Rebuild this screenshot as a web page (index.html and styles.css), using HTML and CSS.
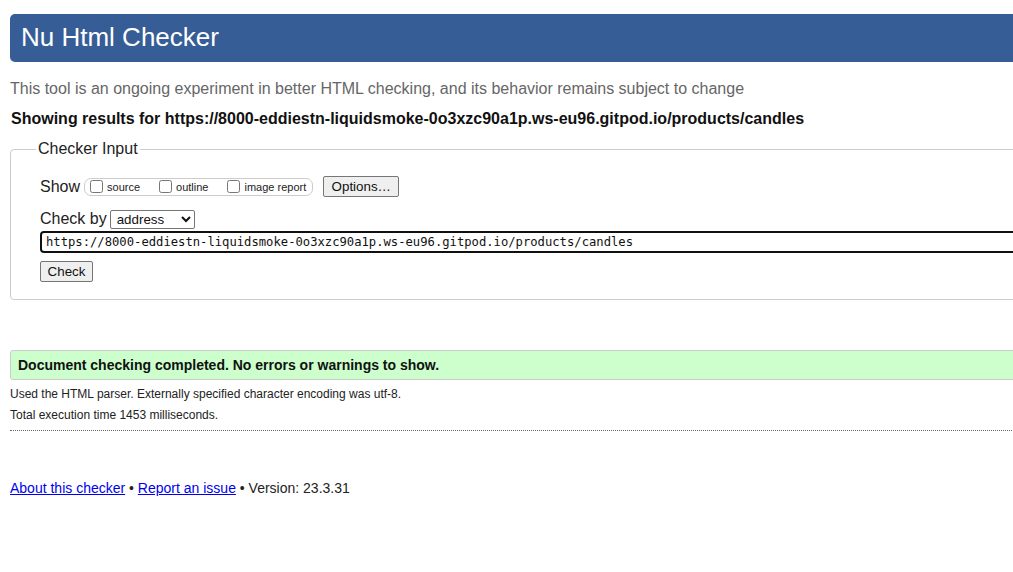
FILE: index.html
```html
<!DOCTYPE html>
<html lang="en">
<head>
<meta charset="utf-8">
<title>Showing results for https://8000-eddiestn-liquidsmoke-0o3xzc90a1p.ws-eu96.gitpod.io/products/candles - Nu Html Checker</title>
<link rel="stylesheet" href="styles.css">
</head>
<body>
<div class="page">
  <h1 class="banner">Nu Html Checker</h1>
  <p class="intro">This tool is an ongoing experiment in better HTML checking, and its behavior remains subject to change</p>
  <p class="showing">Showing results for https://8000-eddiestn-liquidsmoke-0o3xzc90a1p.ws-eu96.gitpod.io/products/candles</p>

  <fieldset class="checker">
    <legend class="checker-legend">Checker Input</legend>
    <div class="row row-show">
      <span class="row-label">Show</span>
      <div class="show-group">
        <label class="opt"><input type="checkbox" class="cb">source</label>
        <label class="opt"><input type="checkbox" class="cb">outline</label>
        <label class="opt"><input type="checkbox" class="cb">image report</label>
      </div>
      <button type="button" class="btn btn-options">Options…</button>
    </div>
    <div class="row row-by">
      <span class="row-label label-by">Check by</span>
      <select class="by-select">
        <option>address</option>
        <option>file upload</option>
        <option>text input</option>
      </select>
    </div>
    <div class="row row-url">
      <input type="url" class="url-input" value="https://8000-eddiestn-liquidsmoke-0o3xzc90a1p.ws-eu96.gitpod.io/products/candles">
    </div>
    <div class="row row-submit">
      <button type="button" class="btn btn-check">Check</button>
    </div>
  </fieldset>

  <p class="success">Document checking completed. No errors or warnings to show.</p>
  <p class="details">Used the HTML parser. Externally specified character encoding was utf-8.</p>
  <p class="details details-time">Total execution time 1453 milliseconds.</p>
  <hr class="sep">

  <p class="footer"><a href="#about">About this checker</a> • <a href="#issue">Report an issue</a> • Version: 23.3.31</p>
</div>
</body>
</html>
```

FILE: styles.css
```css
html, body {
  margin: 0;
  padding: 0;
  overflow: hidden;
  background: #ffffff;
}

body {
  font-family: "Liberation Sans", Arial, sans-serif;
  color: #222;
}

.page {
  width: 1090px;
  padding: 14px 0 0 10px;
}

.banner {
  margin: 0;
  height: 48px;
  line-height: 46px;
  padding-left: 11px;
  background: #365d95;
  color: #fff;
  font-size: 26px;
  font-weight: normal;
  border-radius: 5px;
}

.intro {
  margin: 18px 0 0;
  font-size: 16px;
  line-height: 18px;
  color: #666;
}

.showing {
  margin: 12px 0 0 1px;
  font-size: 16px;
  line-height: 18px;
  font-weight: bold;
  color: #111;
}

.checker {
  margin: 12px 0 0;
  padding: 0 0 17px 29px;
  border: 1px solid #ccc;
  border-radius: 4px;
  min-width: 0;
}

.checker-legend {
  margin-left: -4px;
  padding: 0 2px;
  font-size: 16px;
  line-height: 18px;
  color: #222;
}

.row {
  display: flex;
  align-items: center;
}

.row-label {
  font-size: 16px;
  line-height: 18px;
}

.row-show {
  margin-top: 18px;
  height: 21px;
}

.show-group {
  display: flex;
  align-items: center;
  height: 16px;
  margin-left: 4px;
  padding: 0 6px 0 5px;
  border: 1px solid #ccc;
  border-radius: 7px;
  font-size: 11px;
}

.opt {
  display: flex;
  align-items: center;
  margin-left: 19px;
}

.opt:first-child {
  margin-left: 0;
}

.cb {
  width: 13px;
  height: 13px;
  margin: 0 4px 0 0;
}

.btn {
  font-family: "Liberation Sans", Arial, sans-serif;
  font-size: 13.33px;
  color: #111;
  background: #efefef;
  border: 1px solid #767676;
  border-radius: 2px;
  padding: 0 6px;
  height: 21px;
}

.btn-options {
  margin-left: 10px;
  width: 76px;
}

.row-by {
  margin-top: 12px;
  height: 20px;
}

.label-by {
  margin-right: 3px;
}

.by-select {
  width: 85px;
  height: 19px;
  font-family: "Liberation Sans", Arial, sans-serif;
  font-size: 13.33px;
  color: #111;
  border: 1px solid #767676;
  border-radius: 2px;
  background: #fff;
  padding: 0 0 0 2px;
}

.row-url {
  margin-top: 2px;
}

.url-input {
  box-sizing: border-box;
  width: 100%;
  height: 22px;
  padding: 0 0 0 4px;
  border: 2px solid #101010;
  border-radius: 4px;
  font-family: "DejaVu Sans Mono", "Liberation Mono", monospace;
  font-size: 12.2px;
  color: #111;
  outline: none;
}

.row-submit {
  margin-top: 8px;
}

.btn-check {
  width: 53px;
}

.success {
  margin: 50px 0 0;
  padding: 6px 7px;
  font-size: 14px;
  line-height: 16px;
  font-weight: bold;
  color: #111;
  background: #ccffcc;
  border: 1px solid #ccc;
  border-radius: 3px;
}

.details {
  margin: 7px 0 0;
  font-size: 12px;
  line-height: 14px;
  color: #222;
}

.details-time {
  margin-top: 7px;
}

.sep {
  margin: 8px 0 0;
  border: 0;
  border-top: 1px dotted #666;
  height: 0;
}

.footer {
  margin: 49px 0 0;
  font-size: 14px;
  line-height: 16px;
  color: #222;
}

.footer a {
  color: #0000ee;
  text-decoration: underline;
}
```
